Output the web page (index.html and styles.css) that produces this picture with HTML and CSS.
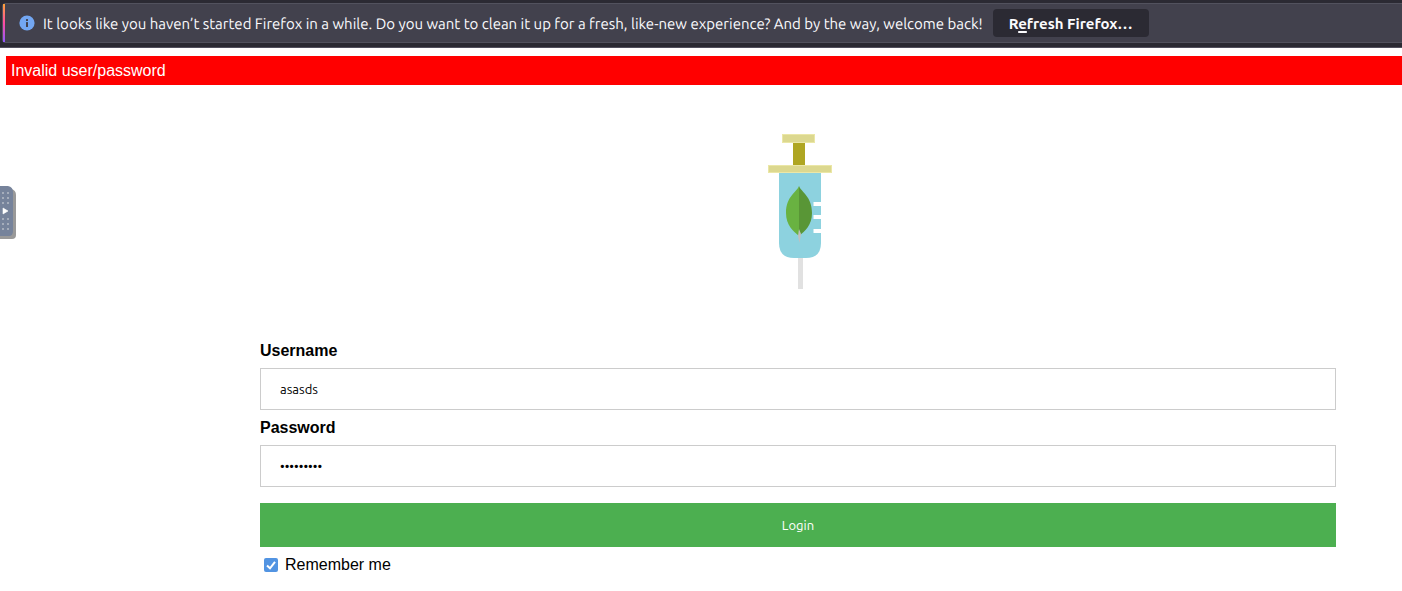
FILE: index.html
```html
<!DOCTYPE html>
<html lang="en">
<head>
<meta charset="utf-8">
<title>Login</title>
<link rel="stylesheet" href="styles.css">
</head>
<body>
<div class="notification-bar">
  <div class="notification">
    <svg class="info-icon" width="16" height="16" viewBox="0 0 16 16" aria-hidden="true">
      <circle cx="8" cy="8" r="7.6" fill="#73a7f3"/>
      <rect x="7" y="4" width="2" height="2" rx=".5" fill="#42414d"/>
      <rect x="7" y="7" width="2" height="5" rx=".5" fill="#42414d"/>
    </svg>
    <span class="message">It looks like you haven’t started Firefox in a while. Do you want to clean it up for a fresh, like-new experience? And by the way, welcome back!</span>
    <button class="refresh" type="button">R<span class="accesskey">e</span>fresh Firefox…</button>
  </div>
</div>
<button class="side-handle" type="button" aria-label="Open panel">
  <svg width="16" height="54" viewBox="0 0 16 54" aria-hidden="true">
    <path d="M0 3H11Q16 4 16 9V49Q16 53 12 53H0Z" fill="#999"/>
    <path d="M0 0H8Q13 1 13 6V45Q13 50 9 50H0Z" fill="#76839b"/>
    <g stroke="#a5adbb" stroke-width="2" stroke-dasharray="2 3">
      <path d="M3 6V18M8 6V18M3 32V45M8 32V45"/>
    </g>
    <path d="M3 22L8 25L3 28Z" fill="#fff" stroke="#fff" stroke-linejoin="round" stroke-width=".6"/>
  </svg>
</button>
<main class="page">
  <div class="alert" role="alert">Invalid user/password</div>
  <div class="logo">
    <svg width="64" height="156" viewBox="0 0 64 156" role="img" aria-label="Syringe with a leaf">
      <rect x="30" y="122" width="5" height="33" fill="#e1e1e1"/>
      <path d="M11 37H53V109Q53 124 38 124H26Q11 124 11 109Z" fill="#8dd2df"/>
      <rect x="25" y="8" width="12" height="24" fill="#afa622"/>
      <rect x="14.5" y=".5" width="32" height="8" fill="#dcd88f" stroke="#ebe7a6"/>
      <rect x=".5" y="31.500" width="63" height="7" fill="#dcd88f" stroke="#ebe7a6"/>
      <g fill="#fff">
        <rect x="45.500" y="68" width="8.500" height="4"/>
        <rect x="45.500" y="81" width="8.500" height="4"/>
        <rect x="45.500" y="95" width="8.500" height="4"/>
      </g>
      <path d="M31 52C29 58 18 62 18 79C18 91 25 97 31 102Z" fill="#69b241"/>
      <path d="M31 52C33 58 44 62 44 79C44 91 37 97 31 102Z" fill="#599636"/>
      <path d="M31 95L33 100L31.500 109L30 102Z" fill="#c2bfbf"/>
    </svg>
  </div>
  <form class="login">
    <label class="field-label" for="username">Username</label>
    <input class="field" id="username" type="text" value="asasds">
    <label class="field-label" for="password">Password</label>
    <input class="field" id="password" type="password" value="asdasdasd">
    <button class="submit" type="button">Login</button>
    <label class="remember"><input class="tick" type="checkbox" checked>Remember me</label>
  </form>
</main>
</body>
</html>
```
FILE: styles.css
```css
* {
  box-sizing: border-box;
}

body {
  margin: 0;
  background: #fff;
  color: #000;
  font: 16px/18px "Liberation Sans", Arial, sans-serif;
}

.notification-bar {
  padding: 3px 0 4px 2px;
  background: #2b2a33;
  border-bottom: 1px solid #52505e;
}

.notification {
  position: relative;
  display: flex;
  align-items: center;
  height: 40px;
  padding-left: 16px;
  background: #42414d;
  border: 1px solid #52525e;
  border-right: 0;
  border-radius: 4px 0 0 4px;
  color: #fbfbfe;
  font: 15px/20px Ubuntu, "Noto Sans", sans-serif;
  text-rendering: geometricPrecision;
  white-space: nowrap;
}

.notification::before {
  content: "";
  position: absolute;
  left: 0;
  top: 0;
  bottom: 0;
  width: 2px;
  background: linear-gradient(#ffa436, #ff4aa2 50%, #9059ff);
}

.info-icon {
  flex: none;
  margin-right: 8px;
}

.message {
  padding-top: 1px;
}

.refresh {
  height: 28px;
  margin-left: 10px;
  padding: 1px 16px 0;
  border: 0;
  border-radius: 4px;
  background: #2b2a33;
  color: #fbfbfe;
  font: bold 15px/20px Ubuntu, "Noto Sans", sans-serif;
}

.accesskey {
  text-decoration: underline 2px;
  text-underline-offset: 2px;
}

.side-handle {
  position: absolute;
  left: 0;
  top: 186px;
  padding: 0;
  border: 0;
  background: none;
}

.side-handle svg {
  display: block;
}

.page {
  padding: 8px 0 16px 6px;
}

.alert {
  padding: 6px 5px 5px;
  background: #f00;
  color: #fff;
}

.logo {
  display: flex;
  justify-content: center;
  padding: 49px 0 52px 192px;
}

.login {
  display: flex;
  flex-direction: column;
  padding: 0 66px 0 254px;
}

.field-label {
  font-weight: bold;
}

.field {
  height: 42px;
  margin: 8px 0 9px;
  padding: 0 19px;
  border: 1px solid #ccc;
  border-radius: 0;
  background: #fff;
  color: #000;
  font: 13px/16px Ubuntu, "Noto Sans", sans-serif;
}

.submit {
  height: 44px;
  margin: 7px 0 9px;
  border: 0;
  background: #4caf50;
  color: #fff;
  font: 13px/16px Ubuntu, "Noto Sans", sans-serif;
}

.remember {
  display: flex;
  align-items: center;
  align-self: flex-start;
}

.tick {
  appearance: none;
  width: 14px;
  height: 14px;
  margin: 0 7px 0 4px;
  border-radius: 2px;
  background: #5294e2 url("data:image/svg+xml,%3Csvg xmlns='http://www.w3.org/2000/svg' viewBox='0 0 14 14'%3E%3Cpath d='M3 7.500L6 10.300L11 3.800' fill='none' stroke='white' stroke-width='2'/%3E%3C/svg%3E") center / 14px 14px;
}
```
